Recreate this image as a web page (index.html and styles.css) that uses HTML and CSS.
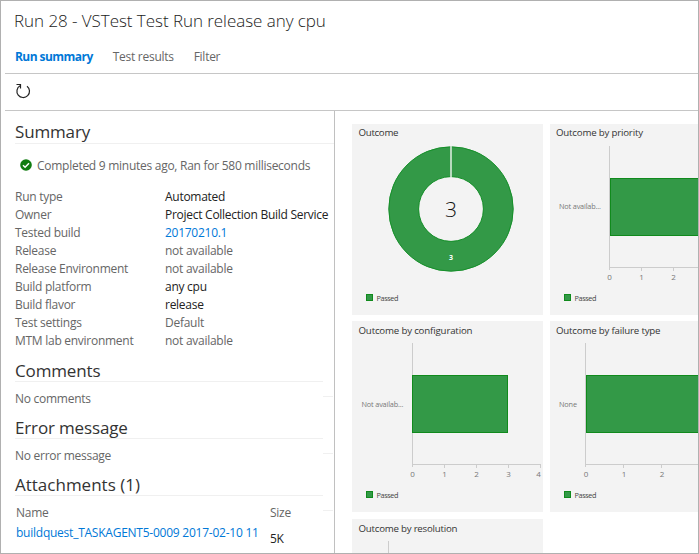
FILE: index.html
```
<!DOCTYPE html>
<html lang="en">
<head>
<meta charset="utf-8">
<title>Run 28 - VSTest Test Run release any cpu</title>
<link rel="stylesheet" href="styles.css">
</head>
<body>
<div class="window">
  <header class="header">
    <h1 class="title">Run 28 - VSTest Test Run release any cpu</h1>
    <nav class="tabs">
      <a class="tab active">Run summary</a>
      <a class="tab results">Test results</a>
      <a class="tab">Filter</a>
    </nav>
  </header>
  <div class="toolbar">
    <svg class="refresh" width="16" height="16" viewBox="0 0 16 16" fill="none" stroke="#222">
      <path d="M12 3.200A6.300 6.300 0 1 1 5 2.800" stroke-width="1.200"/>
      <path d="M1.500 1.500H5.500V5.500" stroke-width="1.200"/>
    </svg>
  </div>
  <main class="content">
    <section class="details">
      <h2 class="heading wide">Summary</h2>
      <div class="status">
        <svg width="12" height="12" viewBox="0 0 12 12"><circle cx="6" cy="6" r="5.8" fill="#107c10"/><path d="M3 6.2L5.1 8.2L9 4.2" fill="none" stroke="#fff" stroke-width="1.5"/></svg>
        <span>Completed 9 minutes ago, Ran for 580 milliseconds</span>
      </div>
      <dl class="fields">
        <dt>Run type</dt><dd class="set">Automated</dd>
        <dt>Owner</dt><dd class="set">Project Collection Build Service</dd>
        <dt>Tested build</dt><dd><a class="link build">20170210.1</a></dd>
        <dt>Release</dt><dd>not available</dd>
        <dt>Release Environment</dt><dd>not available</dd>
        <dt>Build platform</dt><dd class="set">any cpu</dd>
        <dt>Build flavor</dt><dd class="set">release</dd>
        <dt>Test settings</dt><dd>Default</dd>
        <dt>MTM lab environment</dt><dd>not available</dd>
      </dl>
      <div class="group">
        <h2 class="heading">Comments</h2>
        <p class="note">No comments</p>
      </div>
      <div class="group">
        <h2 class="heading">Error message</h2>
        <p class="note">No error message</p>
      </div>
      <div class="group">
        <h2 class="heading attachments">Attachments (1)</h2>
        <div class="files">
          <span class="col">Name</span><span class="col">Size</span>
          <a class="link file">buildquest_TASKAGENT5-0009 2017-02-10 11</a><span class="size">5K</span>
        </div>
      </div>
    </section>
    <section class="charts">
      <svg class="card" viewBox="0 0 191 191">
        <text class="name" x="6.5" y="12" textLength="40">Outcome</text>
        <circle class="ring" cx="99" cy="85" r="47.3"/>
        <circle class="edge" cx="99" cy="85" r="62.2"/>
        <circle class="edge" cx="99" cy="85" r="32.4"/>
        <path class="seam" d="M99 22V54"/>
        <text class="total" x="99" y="92.500">3</text>
        <text class="slice" x="99" y="136">3</text>
        <rect class="bar" x="14.500" y="170.500" width="6" height="6"/>
        <text class="legend" x="24.500" y="176.500" textLength="22">Passed</text>
      </svg>
      <svg class="card" viewBox="0 0 191 191">
        <text class="name" x="6" y="12" textLength="87">Outcome by priority</text>
        <path class="axis" d="M59.500 22V146M59.500 143.500H191M91.500 143.500V147M123.500 143.500V147"/>
        <rect class="bar" x="60.500" y="54.500" width="140" height="57"/>
        <text class="label" x="9" y="85" textLength="42">Not availab...</text>
        <text class="tick" x="59.500" y="155.500">0</text><text class="tick" x="91.500" y="155.500">1</text><text class="tick" x="123.500" y="155.500">2</text>
        <rect class="bar" x="14.500" y="170.500" width="6" height="6"/>
        <text class="legend" x="24.500" y="176.500" textLength="22">Passed</text>
      </svg>
      <svg class="card" viewBox="0 0 191 191">
        <text class="name" x="6.500" y="12.500" textLength="114">Outcome by configuration</text>
        <path class="axis" d="M60.500 22V146M60.500 143.500H189M92.500 144V147M124.500 144V147M156.500 144V147M188.500 144V147"/>
        <rect class="bar" x="60.500" y="54.500" width="95" height="57"/>
        <text class="label" x="9.500" y="85.500" textLength="42">Not availab...</text>
        <text class="tick" x="60.500" y="156">0</text><text class="tick" x="92.500" y="156">1</text><text class="tick" x="124.500" y="156">2</text><text class="tick" x="156.500" y="156">3</text><text class="tick" x="186.500" y="156">4</text>
        <rect class="bar" x="14.500" y="170.500" width="6" height="6"/>
        <text class="legend" x="24.500" y="176.500" textLength="22">Passed</text>
      </svg>
      <svg class="card" viewBox="0 0 191 191">
        <text class="name" x="6" y="12.500" textLength="104.500">Outcome by failure type</text>
        <path class="axis" d="M35.500 22V146M35.500 143.500H191M73.500 144V147M111.500 144V147"/>
        <rect class="bar" x="36.500" y="54.500" width="160" height="57"/>
        <text class="label" x="9" y="85.500" textLength="18">None</text>
        <text class="tick" x="36" y="156">0</text><text class="tick" x="74" y="156">1</text><text class="tick" x="112" y="156">2</text>
        <rect class="bar" x="14.500" y="170.500" width="6" height="6"/>
        <text class="legend" x="24.500" y="176.500" textLength="22">Passed</text>
      </svg>
      <svg class="card" viewBox="0 0 191 191">
        <text class="name" x="6.500" y="12.500" textLength="99">Outcome by resolution</text>
        <path class="axis" d="M36.500 22V146"/>
      </svg>
    </section>
  </main>
</div>
</body>
</html>
```
FILE: styles.css
```
* { box-sizing: border-box; }
body { margin: 0; background: #fff; font-family: "Open Sans", "Noto Sans", sans-serif; font-size: 12px; letter-spacing: -0.27px; color: #666; }
.window { width: 699px; height: 554px; overflow: hidden; border: 1px solid #b0b0b0; padding-left: 4px; display: flex; flex-direction: column; }
.header { flex: none; height: 73px; padding: 8px 0 0 9px; border-bottom: 1px solid #c6c6c6; }
h1, h2, p, dl, dd { margin: 0; font-weight: 400; }
.title { height: 24px; line-height: 24px; font-size: 17px; font-weight: 300; letter-spacing: -0.05px; color: #222; white-space: nowrap; }
.tabs { display: flex; gap: 20px; padding: 14px 0 0 1px; line-height: 20px; }
.tab.active { color: #0078d7; font-weight: 700; letter-spacing: -0.55px; }
.toolbar { flex: none; height: 37px; border-bottom: 1px solid #c6c6c6; padding: 9px 0 0 10px; }
.refresh { display: block; }
.content { flex: 1; min-height: 0; display: flex; }
.details { flex: none; width: 330px; padding: 9px 0 0 10px; border-right: 1px solid #c0c0c0; overflow: hidden; white-space: nowrap; }
.heading { width: 308px; height: 24px; line-height: 26px; font-size: 17px; letter-spacing: -0.15px; color: #333; border-bottom: 1px solid #f0f0f0; }
.heading.wide { width: 319px; line-height: 24px; }
.heading.attachments { letter-spacing: 0; }
.status { display: flex; align-items: center; gap: 5px; height: 20px; margin: 11px 0 12px 5px; }
.fields { display: grid; grid-template-columns: 150px 1fr; grid-auto-rows: 18px; line-height: 19px; margin-bottom: 9px; }
.set, .size { color: #222; }
.link { color: #0078d7; }
.group { height: 57px; }
.note { height: 33px; line-height: 34px; display: flex; justify-content: space-between; width: 318px; }
.note::after, .files::after { content: ""; width: 10px; height: 1px; margin-top: 14px; background: #f0f0f0; }
.files { display: grid; grid-template-columns: 254px 53px 10px; grid-template-rows: 33px 18px; padding-left: 1px; }
.files::after { grid-column: 3; grid-row: 1; }
.col { line-height: 33px; }
.file { line-height: 8px; letter-spacing: -0.24px; }
.size { line-height: 20px; }
.charts { flex: 1; min-width: 0; overflow: hidden; padding: 13px 0 0 17px; display: grid; grid-template-columns: 192px 191px; grid-template-rows: 191px 192px 191px; gap: 6px; }
.card { width: 191px; height: 191px; background: #f3f3f3; overflow: hidden; letter-spacing: 0; }
.name { font-size: 9.7px; fill: #333; }
.legend { font-size: 7.3px; fill: #444; }
.label, .tick { font-size: 7.3px; fill: #777; }
.tick { font-size: 8px; }
.tick, .total, .slice { text-anchor: middle; }
.total { font-size: 21px; font-weight: 300; fill: #111; }
.slice { font-size: 7px; font-weight: 700; fill: #fff; }
.ring { fill: none; stroke: #339947; stroke-width: 30; }
.edge { fill: none; stroke: #16902a; stroke-width: 1; }
.seam { stroke: #e4f0e6; stroke-width: 1.5; }
.bar { fill: #339947; stroke: #108a1c; stroke-width: 1; }
.axis { fill: none; stroke: #ccc; stroke-width: 1; }
```
